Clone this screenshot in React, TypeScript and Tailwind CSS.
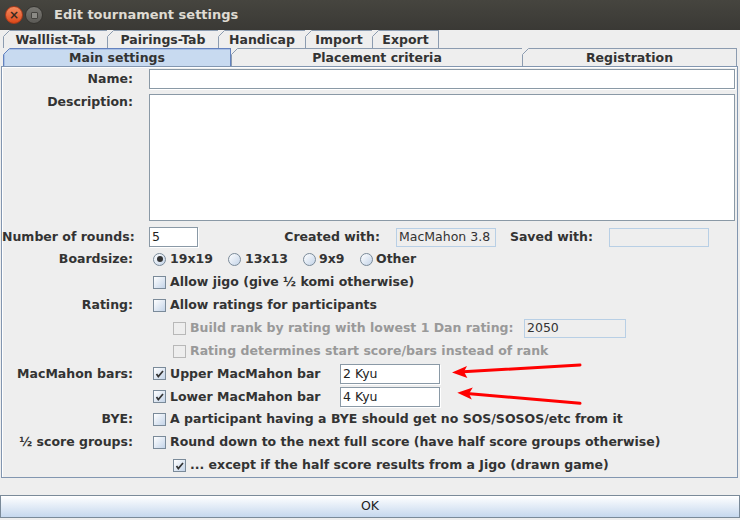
import React from "react";

function Corner({ color }: { color: string }) {
  return (
    <svg className="absolute top-[-1px] left-[-1px]" width="7" height="7" viewBox="0 0 7 7">
      <polygon points="0,0 7,0 0,7" fill="#eeeeee" />
      <line x1="0.5" y1="6.5" x2="6.5" y2="0.5" stroke={color} strokeWidth="1" />
    </svg>
  );
}

function Tab({ label, w, selected }: { label: string; w: string; selected?: boolean }) {
  return (
    <div
      className={
        selected
          ? `relative ${w} h-full flex items-center justify-center border border-b-0 border-[#6382bf] bg-[#c8daf0] shadow-[inset_1px_1px_0_#a9c0e4]`
          : `relative ${w} h-full flex items-center justify-center border border-b-0 border-r-0 border-[#8c9cb0] bg-[#eeeeee]`
      }
    >
      <Corner color={selected ? "#6382bf" : "#8c9cb0"} />
      <span className="translate-y-[1px] font-bold text-[12.5px] leading-none text-[#333333]">{label}</span>
    </div>
  );
}

function Check({ checked, disabled }: { checked?: boolean; disabled?: boolean }) {
  return (
    <span
      className={
        disabled
          ? "w-[13px] h-[13px] shrink-0 border border-[#b8b8b8] bg-[#eeeeee] flex items-center justify-center"
          : "w-[13px] h-[13px] shrink-0 border border-[#7a8a99] bg-gradient-to-br from-[#ffffff] to-[#c4d4e8] flex items-center justify-center"
      }
    >
      {checked && (
        <svg width="9" height="9" viewBox="0 0 9 9">
          <path d="M1.5 5 L3.3 7.5 L8 2" fill="none" stroke="#333333" strokeWidth="1.7" />
        </svg>
      )}
    </span>
  );
}

function Radio({ selected }: { selected?: boolean }) {
  return (
    <span className="w-[13px] h-[13px] shrink-0 rounded-full border border-[#7a8a99] bg-gradient-to-br from-[#ffffff] to-[#c4d4e8] flex items-center justify-center">
      {selected && <span className="w-[6px] h-[6px] rounded-full bg-[#333333]" />}
    </span>
  );
}

function Row({ label, children, h = "h-[23px]" }: { label?: string; children?: React.ReactNode; h?: string }) {
  return (
    <div className={`flex items-center ${h}`}>
      <div className="w-[131px] shrink-0 text-right font-bold text-[12.5px] text-[#333333] whitespace-nowrap">{label}</div>
      <div className="ml-[16px] flex items-center flex-1 min-w-0">{children}</div>
    </div>
  );
}

function CheckItem({ text, checked, disabled, indent }: { text: string; checked?: boolean; disabled?: boolean; indent?: boolean }) {
  return (
    <div className={indent ? "flex items-center ml-[24px]" : "flex items-center ml-[4px]"}>
      <Check checked={checked} disabled={disabled} />
      <span
        className={
          disabled
            ? "ml-[4px] font-bold text-[12.5px] text-[#999999] whitespace-nowrap"
            : "ml-[4px] font-bold text-[12.5px] text-[#333333] whitespace-nowrap"
        }
      >
        {text}
      </span>
    </div>
  );
}

function Field({ w, value, disabled, h = "h-[20px]" }: { w: string; value?: string; disabled?: boolean; h?: string }) {
  return (
    <div
      className={
        disabled
          ? `${w} ${h} shrink-0 border border-[#b8cfe5] bg-[#eeeeee] flex items-center pl-[2px] text-[12.5px] text-[#333333]`
          : `${w} ${h} shrink-0 border border-[#8a99a6] bg-white flex items-center pl-[2px] text-[12.5px] text-[#222222] shadow-[1px_1px_0_#ffffff]`
      }
    >
      {value}
    </div>
  );
}

export default function App() {
  return (
    <div className="relative w-[740px] h-[520px] bg-[#eeeeee] flex flex-col overflow-hidden font-['DejaVu_Sans',sans-serif] text-[#333333]">
      {/* Title bar */}
      <div className="h-[30px] shrink-0 bg-gradient-to-b from-[#46453f] to-[#3a3935] flex items-center pl-[5px]">
        <div className="w-[18px] h-[18px] rounded-full bg-gradient-to-b from-[#f48b5e] to-[#dc4715] border border-[#a8391a] flex items-center justify-center">
          <span className="text-[12px] leading-none font-bold text-[#3a2a20]">×</span>
        </div>
        <div className="ml-[2px] w-[18px] h-[18px] rounded-full bg-gradient-to-b from-[#7a7974] to-[#5b5a56] border border-[#34332f] flex items-center justify-center">
          <span className="w-[7px] h-[7px] rounded-[1px] bg-[#8c8b86] border border-[#44433f]" />
        </div>
        <span className="ml-[11px] font-bold text-[13px] text-[#dfdbd2]">Edit tournament settings</span>
      </div>

      {/* Tab row 1 */}
      <div className="h-[18px] shrink-0 flex pl-[3px]">
        <Tab label="Walllist-Tab" w="w-[104px]" />
        <Tab label="Pairings-Tab" w="w-[111px]" />
        <Tab label="Handicap" w="w-[87px]" />
        <Tab label="Import" w="w-[67px]" />
        <div className="border-r border-[#8c9cb0] flex">
          <Tab label="Export" w="w-[66px]" />
        </div>
      </div>
      {/* Tab row 2 */}
      <div className="h-[18px] shrink-0 flex pl-[3px]">
        <Tab label="Main settings" w="w-[228px]" selected />
        <Tab label="Placement criteria" w="w-[291px]" />
        <div className="border-r border-[#8c9cb0] flex">
          <Tab label="Registration" w="w-[214px]" />
        </div>
      </div>

      {/* Panel */}
      <div className="ml-[1px] w-[737px] h-[412px] shrink-0 border border-[#8296b0] shadow-[inset_1px_1px_0_#ffffff] pt-[2px] pr-[2px] flex flex-col">
        <Row label="Name:" h="h-[20px]">
          <Field w="flex-1" />
        </Row>
        <div className="flex mt-[5px]">
          <div className="w-[131px] shrink-0 text-right font-bold text-[12.5px] leading-[15px] text-[#333333]">Description:</div>
          <div className="ml-[16px] flex-1 h-[127px] border border-[#8a99a6] bg-white" />
        </div>
        <div className="mt-[6px] mb-[1px]">
          <Row label="Number of rounds:" h="h-[20px]">
            <Field w="w-[49px]" value="5" />
            <span className="w-[182px] shrink-0 text-right font-bold text-[12.5px] whitespace-nowrap">Created with:</span>
            <div className="ml-[16px]">
              <Field w="w-[100px]" value="MacMahon 3.8" disabled h="h-[19px]" />
            </div>
            <span className="w-[97px] shrink-0 text-right font-bold text-[12.5px] whitespace-nowrap">Saved with:</span>
            <div className="ml-[16px]">
              <Field w="w-[100px]" disabled h="h-[19px]" />
            </div>
          </Row>
        </div>
        <Row label="Boardsize:">
          <div className="flex items-center ml-[4px]">
            <div className="w-[75px] flex items-center">
              <Radio selected />
              <span className="ml-[4px] font-bold text-[12.5px]">19x19</span>
            </div>
            <div className="w-[75px] flex items-center">
              <Radio />
              <span className="ml-[4px] font-bold text-[12.5px]">13x13</span>
            </div>
            <div className="w-[57px] flex items-center">
              <Radio />
              <span className="ml-[3px] font-bold text-[12.5px]">9x9</span>
            </div>
            <div className="flex items-center">
              <Radio />
              <span className="ml-[3px] font-bold text-[12.5px]">Other</span>
            </div>
          </div>
        </Row>
        <Row>
          <CheckItem text="Allow jigo (give ½ komi otherwise)" />
        </Row>
        <Row label="Rating:">
          <CheckItem text="Allow ratings for participants" />
        </Row>
        <Row>
          <div className="flex items-center ml-[24px]">
            <Check disabled />
            <span className="ml-[4px] w-[334px] shrink-0 font-bold text-[12.5px] text-[#999999] whitespace-nowrap">
              Build rank by rating with lowest 1 Dan rating:
            </span>
            <Field w="w-[102px]" value="2050" disabled h="h-[19px]" />
          </div>
        </Row>
        <Row>
          <CheckItem text="Rating determines start score/bars instead of rank" disabled indent />
        </Row>
        <Row label="MacMahon bars:">
          <div className="flex items-center ml-[4px]">
            <Check checked />
            <span className="ml-[4px] w-[170px] shrink-0 font-bold text-[12.5px] whitespace-nowrap">Upper MacMahon bar</span>
            <Field w="w-[100px]" value="2 Kyu" />
          </div>
        </Row>
        <Row>
          <div className="flex items-center ml-[4px]">
            <Check checked />
            <span className="ml-[4px] w-[170px] shrink-0 font-bold text-[12.5px] whitespace-nowrap">Lower MacMahon bar</span>
            <Field w="w-[100px]" value="4 Kyu" />
          </div>
        </Row>
        <Row label="BYE:">
          <CheckItem text="A participant having a BYE should get no SOS/SOSOS/etc from it" />
        </Row>
        <Row label="½ score groups:">
          <CheckItem text="Round down to the next full score (have half score groups otherwise)" />
        </Row>
        <Row>
          <CheckItem text="... except if the half score results from a Jigo (drawn game)" checked indent />
        </Row>
      </div>

      {/* OK button */}
      <div className="mt-[17px] h-[23px] shrink-0 border border-[#7a8a99] shadow-[inset_0_1px_0_#ffffff] bg-gradient-to-b from-[#ffffff] to-[#c6d8ee] flex items-center justify-center">
        <span className="text-[12.5px] text-[#222222]">OK</span>
      </div>

      {/* Red arrows overlay */}
      <svg className="absolute left-0 top-0 pointer-events-none" width="740" height="520" viewBox="0 0 740 520">
        <line x1="580" y1="365" x2="463" y2="371.8" stroke="#ff0000" strokeWidth="3" strokeLinecap="round" />
        <polygon points="452,372.5 467,366 464,371.8 467.4,378" fill="#ff0000" />
        <line x1="580" y1="403.3" x2="467" y2="393.6" stroke="#ff0000" strokeWidth="3" strokeLinecap="round" />
        <polygon points="457.3,392.7 472.8,387.5 469,393.7 471.8,399.5" fill="#ff0000" />
      </svg>
    </div>
  );
}
